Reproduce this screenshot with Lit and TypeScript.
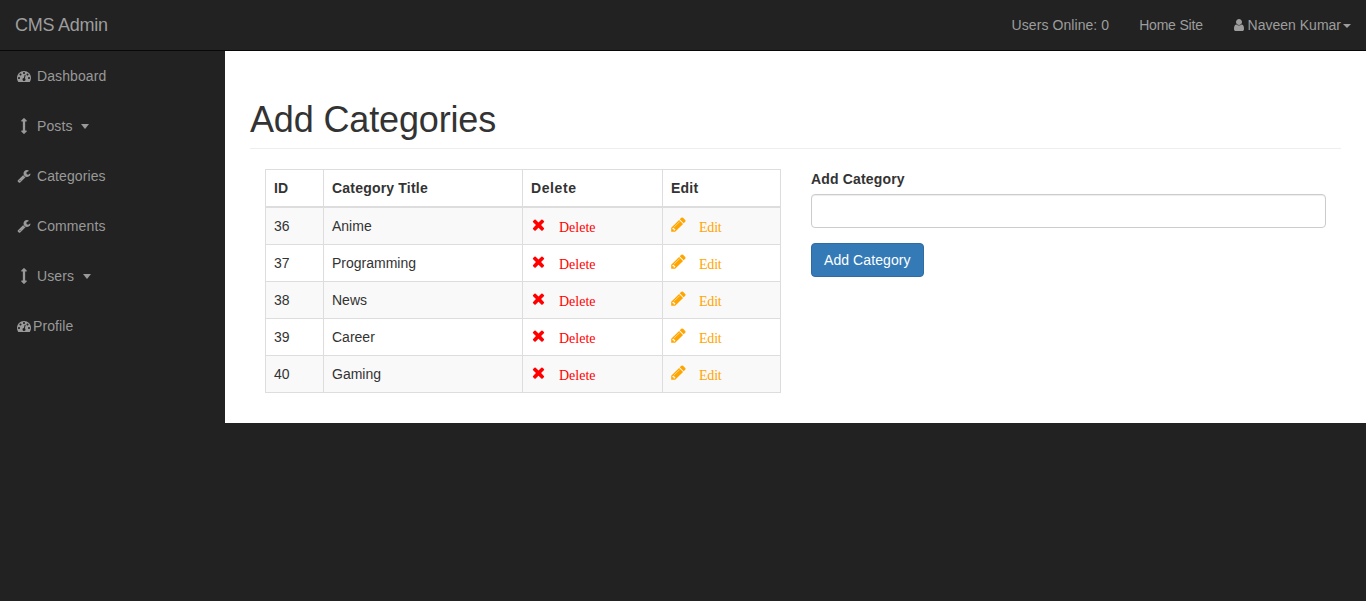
import { LitElement, html, css, svg } from "lit";
import { customElement } from "lit/decorators.js";

const P = {
  times: "M1490 1322q0 40-28 68l-136 136q-28 28-68 28t-68-28l-294-294-294 294q-28 28-68 28t-68-28l-136-136q-28-28-28-68t28-68l294-294-294-294q-28-28-28-68t28-68l136-136q28-28 68-28t68 28l294 294 294-294q28-28 68-28t68 28l136 136q28 28 28 68t-28 68l-294 294 294 294q28 28 28 68z",
  pencil: "M491 1536l91-91-235-235-91 91v107h128v128h107zm523-928q0-22-22-22-10 0-17 7l-542 542q-7 7-7 17 0 22 22 22 10 0 17-7l542-542q7-7 7-17zm-54-192l416 416-832 832h-416v-416zm683 96q0 53-37 90l-166 166-416-416 166-165q36-38 90-38 53 0 91 38l235 234q37 39 37 91z",
  wrench: "M448 1472q0-26-19-45t-45-19-45 19-19 45 19 45 45 19 45-19 19-45zm644-420l-682 682q-37 37-90 37-52 0-91-37l-106-108q-38-36-38-90 0-53 38-91l681-681q39 98 114.5 173.5t173.5 114.5zm634-435q0 39-23 106-47 134-164.5 217.5t-258.5 83.5q-185 0-316.5-131.5t-131.5-316.5 131.5-316.5 316.5-131.5q58 0 121.5 16.5t107.5 46.5q16 11 16 28t-16 28l-293 169v224l193 107q5-3 79-48.5t135.5-81 70.5-35.5q15 0 23.5 10t8.5 25z",
  user: "M1536 1399q0 109-62.5 187t-150.5 78h-854q-88 0-150.5-78t-62.5-187q0-85 8.5-160.5t31.5-152 58.5-131 94-89 134.5-34.5q131 128 313 128t313-128q76 0 134.5 34.5t94 89 58.5 131 31.5 152 8.5 160.5zm-256-887q0 159-112.5 271.5t-271.5 112.5-271.5-112.5-112.5-271.5 112.5-271.5 271.5-112.5 271.5 112.5 112.5 271.5z",
  arrows: "M1216 320q0 26-19 45t-45 19h-128v1024h128q26 0 45 19t19 45-19 45l-256 256q-19 19-45 19t-45-19l-256-256q-19-19-19-45t19-45 45-19h128v-1024h-128q-26 0-45-19t-19-45 19-45l256-256q19-19 45-19t45 19l256 256q19 19 19 45z",
  dash: "M384 1152q0-53-37.5-90.5t-90.5-37.5-90.5 37.5-37.5 90.5 37.5 90.5 90.5 37.5 90.5-37.5 37.5-90.5zm192-448q0-53-37.5-90.5t-90.5-37.5-90.5 37.5-37.5 90.5 37.5 90.5 90.5 37.5 90.5-37.5 37.5-90.5zm428 481l101-382q6-26-7.5-48.5t-38.5-29.5-48 6.5-30 39.5l-101 382q-60 5-107 43.5t-63 98.5q-20 77 20 146t117 89 146-20 89-117q16-60-6-117t-72-91zm660-33q0-53-37.5-90.5t-90.5-37.5-90.5 37.5-37.5 90.5 37.5 90.5 90.5 37.5 90.5-37.5 37.5-90.5zm-640-640q0-53-37.5-90.5t-90.5-37.5-90.5 37.5-37.5 90.5 37.5 90.5 90.5 37.5 90.5-37.5 37.5-90.5zm448 192q0-53-37.5-90.5t-90.5-37.5-90.5 37.5-37.5 90.5 37.5 90.5 90.5 37.5 90.5-37.5 37.5-90.5zm320 448q0 261-141 483-19 29-54 29h-1402q-35 0-54-29-141-221-141-483 0-182 71-348t191-286 286-191 348-71 348 71 286 191 191 286 71 348z",
};

const icon = (d: string, cls = "") =>
  html`<svg class="ico ${cls}" viewBox="0 0 1792 1792" fill="currentColor" aria-hidden="true">${svg`<path d=${d}></path>`}</svg>`;

const NAV = [
  { i: P.dash, t: "Dashboard" },
  { i: P.arrows, t: "Posts", caret: true, big: true },
  { i: P.wrench, t: "Categories" },
  { i: P.wrench, t: "Comments" },
  { i: P.arrows, t: "Users", caret: true, big: true },
  { i: P.dash, t: "Profile", tight: true },
];

const CATS = [
  [36, "Anime"],
  [37, "Programming"],
  [38, "News"],
  [39, "Career"],
  [40, "Gaming"],
];

@customElement("app-root")
export class AppRoot extends LitElement {
  static styles = css`
    :host {
      display: block;
      min-height: 100vh;
      background: #222;
      font-family: "Liberation Sans", Arial, sans-serif;
      font-size: 14px;
      line-height: 20px;
      color: #333;
    }
    .ico { width: 14px; height: 14px; flex: none; display: block; }
    .ico.big { width: 16px; height: 16px; }

    .top {
      height: 50px;
      border-bottom: 1px solid #080808;
      display: flex;
      align-items: center;
      justify-content: space-between;
      color: #9d9d9d;
    }
    .brand { font-size: 18px; padding: 0 15px; letter-spacing: -0.25px; }
    .links { display: flex; align-items: center; }
    .links span.item { padding: 0 15px; display: flex; align-items: center; }
    .links .home { letter-spacing: -0.2px; }
    .links .online { letter-spacing: 0.07px; }
    .links .ico { width: 14px; height: 14px; margin: 0 -2px 0 -1px; }
    .caret-b {
      display: inline-block;
      border-top: 4px solid #9d9d9d;
      border-left: 4px solid transparent;
      border-right: 4px solid transparent;
      margin-left: 2px;
      margin-top: 2px;
    }

    .body { display: flex; align-items: flex-start; }
    .side { width: 225px; flex: none; color: #999; }
    .side a {
      height: 50px;
      padding: 0 15px;
      display: flex;
      align-items: center;
      box-sizing: border-box;
      letter-spacing: 0.1px;
    }
    .fw { width: 18px; display: flex; justify-content: center; flex: none; margin-right: 4px; }
    .tight .fw { margin-right: 0; }
    .caret-s {
      border-top: 5px solid #999;
      border-left: 4px solid transparent;
      border-right: 4px solid transparent;
      margin-left: 8.5px;
      margin-top: 1px;
    }

    .main {
      flex: 1;
      background: #fff;
      padding: 49.4px 25px 10px;
      min-width: 0;
    }
    h1 {
      margin: 0 0 20px;
      padding-bottom: 8px;
      border-bottom: 1px solid #eee;
      font-size: 36px;
      font-weight: 500;
      line-height: 39.6px;
      letter-spacing: -0.15px;
    }
    .cols {
      display: grid;
      grid-template-columns: 516px 515px;
      column-gap: 30px;
      padding: 0 15px;
    }
    table {
      border-collapse: collapse;
      table-layout: fixed;
      width: 516px;
      margin-bottom: 20px;
    }
    th, td {
      border: 1px solid #ddd;
      padding: 8px;
      text-align: left;
      height: 20px;
    }
    th { border-bottom-width: 2px; font-weight: 700; letter-spacing: 0.2px; }
    th.wide { letter-spacing: 0.6px; }
    tbody tr:nth-child(odd) { background: #f9f9f9; }
    .act { display: flex; align-items: center; height: 20px; }
    .act .ico { width: 17px; height: 17px; margin: -2px 1px 0 -1px; }
    .act a {
      font-family: "Liberation Serif", "Times New Roman", serif;
      margin-left: 11px;
      margin-top: 4px;
    }
    .del { color: #f00; }
    .edit { color: #ffa500; }
    .edit a { letter-spacing: -0.2px; }

    label { display: block; font-weight: 700; margin-bottom: 5px; letter-spacing: 0.17px; }
    .input {
      display: block;
      box-sizing: border-box;
      width: 100%;
      height: 34px;
      border: 1px solid #ccc;
      border-radius: 4px;
      box-shadow: inset 0 1px 1px rgba(0, 0, 0, 0.075);
      background: #fff;
      margin-bottom: 15px;
    }
    button {
      display: block;
      height: 34px;
      padding: 0 12px;
      font: inherit;
      letter-spacing: 0.08px;
      color: #fff;
      background: #337ab7;
      border: 1px solid #2e6da4;
      border-radius: 4px;
    }
  `;

  render() {
    return html`
      <div class="top">
        <span class="brand">CMS Admin</span>
        <div class="links">
          <span class="item online">Users Online: 0</span>
          <span class="item home">Home Site</span>
          <span class="item">${icon(P.user)}&nbsp;Naveen Kumar<i class="caret-b"></i></span>
        </div>
      </div>
      <div class="body">
        <nav class="side">
          ${NAV.map(
            (n) => html`<a class=${n.tight ? "tight" : ""}>
              <span class="fw">${icon(n.i, n.big ? "big" : "")}</span>${n.t}${n.caret ? html`<i class="caret-s"></i>` : ""}
            </a>`
          )}
        </nav>
        <main class="main">
          <h1>Add Categories</h1>
          <div class="cols">
            <table>
              <colgroup>
                <col style="width:58px" /><col style="width:199px" /><col style="width:140px" /><col style="width:118px" />
              </colgroup>
              <thead>
                <tr><th>ID</th><th>Category Title</th><th class="wide">Delete</th><th>Edit</th></tr>
              </thead>
              <tbody>
                ${CATS.map(
                  ([id, t]) => html`<tr>
                    <td>${id}</td>
                    <td>${t}</td>
                    <td><div class="act del">${icon(P.times)}<a>Delete</a></div></td>
                    <td><div class="act edit">${icon(P.pencil)}<a>Edit</a></div></td>
                  </tr>`
                )}
              </tbody>
            </table>
            <form>
              <label>Add Category</label>
              <div class="input"></div>
              <button type="button">Add Category</button>
            </form>
          </div>
        </main>
      </div>
    `;
  }
}
